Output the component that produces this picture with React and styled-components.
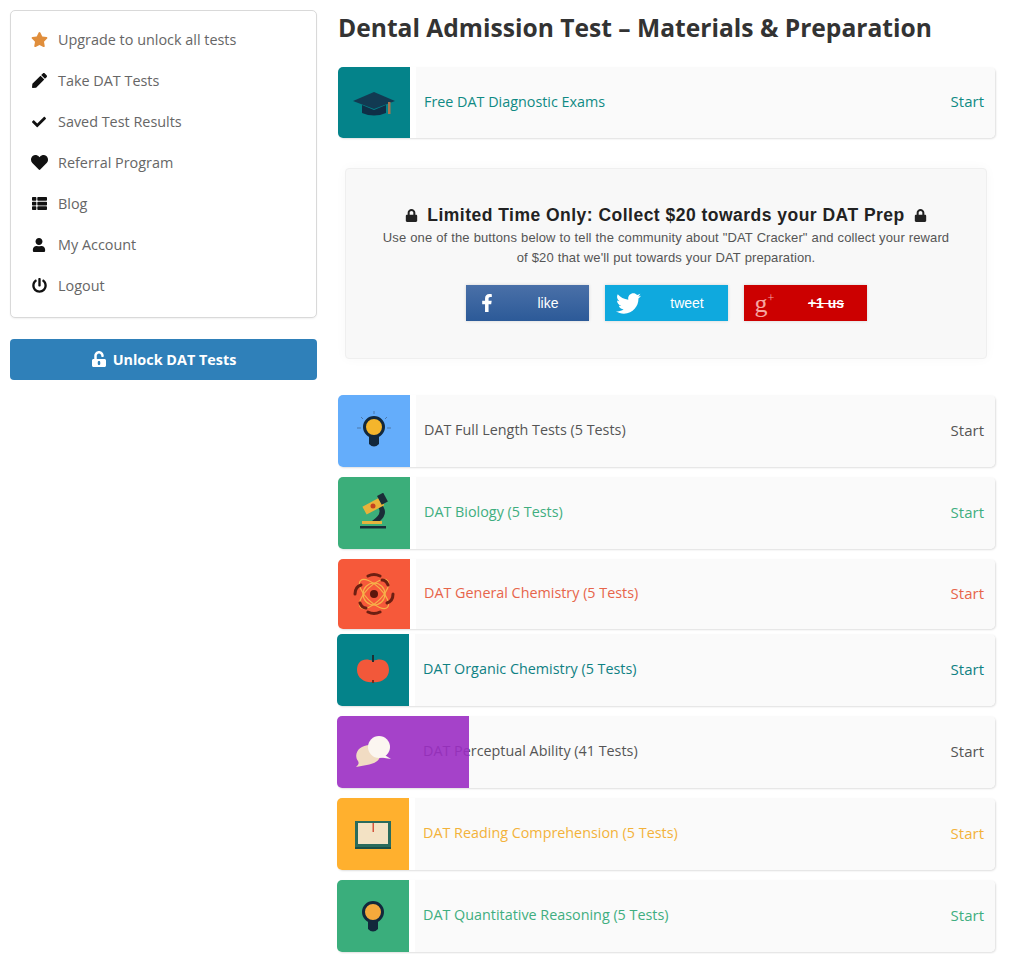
import React from 'react'
import styled, { createGlobalStyle } from 'styled-components'
import {
  FaStar, FaPen, FaCheck, FaHeart, FaThList, FaUser, FaPowerOff,
  FaLock, FaUnlockAlt, FaFacebookF, FaTwitter,
} from 'react-icons/fa'

const GlobalStyle = createGlobalStyle`
  html, body { margin: 0; padding: 0; background: #fff; }
  body { font-family: "Open Sans", "Liberation Sans", sans-serif; color: #555; }
  * { box-sizing: border-box; }
`

const Page = styled.div`
  display: grid;
  grid-template-columns: 307px 657px;
  column-gap: 21px;
  align-items: start;
  width: 1024px;
  height: 954px;
  padding: 10px 0 0 10px;
  overflow: hidden;
`

const Sidebar = styled.aside`
  display: flex;
  flex-direction: column;
  gap: 21px;
`

const MenuCard = styled.ul`
  list-style: none;
  margin: 0;
  height: 308px;
  padding: 8px 0 0 19px;
  background: #fff;
  border: 1px solid #d9d9d9;
  border-radius: 5px;
  box-shadow: 0 1px 2px rgba(0, 0, 0, 0.06);
`

const MenuItem = styled.li`
  display: flex;
  align-items: center;
  height: 41px;
  font-size: 14.4px;
  color: #666;
`

const MenuIcon = styled.span`
  display: flex;
  justify-content: center;
  width: 18px;
  margin-right: 10px;
  font-size: ${p => p.$size || 15}px;
  color: ${p => p.$color || '#111'};
`

const UnlockButton = styled.button`
  display: flex;
  align-items: center;
  justify-content: center;
  gap: 6px;
  height: 41px;
  border: 0;
  border-radius: 4px;
  background: #2f80b9;
  color: #fff;
  font-family: inherit;
  font-size: 14.4px;
  font-weight: 700;
  svg { font-size: 16px; margin-top: -2px; }
`

const Main = styled.main`
  display: flex;
  flex-direction: column;
`

const Title = styled.h1`
  margin: 0 0 22px;
  font-size: 24.6px;
  line-height: 35px;
  font-weight: 700;
  color: #333;
  white-space: nowrap;
`

const Row = styled.div`
  display: flex;
  align-items: center;
  flex: none;
  height: ${p => p.$height || 72}px;
  margin-bottom: ${p => p.$below ?? 10}px;
  margin-left: ${p => (p.$shift ? -1 : 0)}px;
  background: linear-gradient(to right, #fff 78px, #fafafa 78px);
  border-radius: 5px;
  box-shadow: 1px 1px 2px rgba(0, 0, 0, 0.13);
  font-size: 14.35px;
  color: ${p => p.$color};
`

const Tile = styled.div`
  position: ${p => (p.$wide ? 'relative' : 'static')};
  z-index: ${p => (p.$wide ? 1 : 'auto')};
  display: flex;
  align-items: center;
  flex: none;
  justify-content: flex-start;
  width: ${p => (p.$wide ? 132 : 72)}px;
  height: 100%;
  margin-right: ${p => (p.$wide ? -60 : 0)}px;
  padding-left: 14px;
  background: ${p => p.$bg};
  border-radius: 5px 0 0 5px;
`

const RowLabel = styled.span`
  flex: 1;
  padding-left: 14px;
  margin-top: -3px;
`

const RowStart = styled.span`
  padding-right: 11px;
  margin-top: -3px;
  font-size: 15px;
`

const Promo = styled.section`
  display: flex;
  flex-direction: column;
  align-items: center;
  width: 642px;
  height: 191px;
  margin: 30px 0 36px 7px;
  padding-top: 36px;
  background: #f8f8f8;
  border: 1px solid #efefef;
  border-radius: 4px;
  box-shadow: 0 0 12px rgba(0, 0, 0, 0.03);
  font-family: "Liberation Sans", Arial, sans-serif;
  text-align: center;
`

const PromoTitle = styled.h2`
  display: flex;
  align-items: center;
  gap: 9px;
  margin: 0;
  font-size: 17.5px;
  line-height: 20px;
  font-weight: 700;
  color: #222;
  letter-spacing: 0.48px;
  svg { font-size: 13px; }
`

const PromoText = styled.p`
  width: 600px;
  margin: 3px 0 17px;
  font-size: 13px;
  letter-spacing: 0.1px;
  word-spacing: 0.3px;
  line-height: 20px;
  color: #555;
`

const SocialRow = styled.div`
  display: flex;
  gap: 16px;
`

const SocialButton = styled.div`
  display: flex;
  align-items: center;
  width: 123px;
  height: 36px;
  background: ${p => p.$bg};
  color: #fff;
  font-size: 14px;
  box-shadow: 0 0 3px rgba(0, 0, 0, 0.15);
`

const SocialGlyph = styled.span`
  display: flex;
  align-items: center;
  justify-content: center;
  width: ${p => p.$width || 42}px;
  height: 100%;
  font-size: 18px;
`

const SocialLabel = styled.span`
  flex: 1;
  padding-right: ${p => p.$padRight || 0}px;
  font-weight: ${p => (p.$bold ? 700 : 400)};
  text-decoration: ${p => (p.$strike ? 'line-through' : 'none')};
`

const GooglePlus = styled.span`
  font-family: "Liberation Serif", serif;
  font-size: 26px;
  line-height: 26px;
  color: #f6a6a0;
  margin-top: -4px;
  sup { font-size: 12px; }
`

const Cap = () => (
  <svg width="44" height="32" viewBox="0 0 44 32">
    <path d="M22 5 L43 14 L22 22 L1 14 Z" fill="#123a52" />
    <path d="M10 18 L22 23 L34 18 V26 Q22 31 10 26 Z" fill="#0f2f47" />
    <rect x="36" y="15" width="2.5" height="12" fill="#a9764f" />
  </svg>
)

const Bulb = ({ fill = '#f4b52c', rays }) => (
  <svg width="44" height="40" viewBox="0 0 44 40">
    {rays && (
      <g stroke="#41628a" strokeWidth="1" opacity="0.7">
        <line x1="22" y1="0" x2="22" y2="3" />
        <line x1="9" y1="6" x2="11" y2="8" />
        <line x1="35" y1="6" x2="33" y2="8" />
        <line x1="5" y1="17" x2="9" y2="17" />
        <line x1="35" y1="17" x2="39" y2="17" />
      </g>
    )}
    <circle cx="22" cy="16" r="9.5" fill={fill} stroke="#12283c" strokeWidth="3" />
    <path d="M17 24 H27 V33 Q22 38 17 33 Z" fill="#12283c" />
  </svg>
)

const Microscope = () => (
  <svg width="44" height="40" viewBox="0 0 44 40">
    <path d="M8 33 H34 V35.5 H8 Z" fill="#1a2d38" />
    <path d="M10 28 H30 V31 H10 Z" fill="#e6b33e" />
    <path d="M28 10 Q38 19 28 28 H20 Q32 20 25 13 Z" fill="#1a2d38" />
    <rect x="11" y="8" width="20" height="9" transform="rotate(-28 22 12)" fill="#e8b23a" />
    <rect x="27" y="1" width="7" height="10" transform="rotate(-28 30 6)" fill="#1a2d38" />
    <circle cx="21" cy="13" r="2.5" fill="#c5401f" />
  </svg>
)

const Atom = () => (
  <svg width="44" height="44" viewBox="0 0 44 44">
    <g fill="none" stroke="#f7b24a" strokeWidth="1.2">
      <circle cx="22" cy="22" r="11" />
      <ellipse cx="22" cy="22" rx="19" ry="8" transform="rotate(45 22 22)" />
      <ellipse cx="22" cy="22" rx="19" ry="8" transform="rotate(-45 22 22)" />
    </g>
    <g fill="none" stroke="#6d1f12" strokeWidth="3" strokeLinecap="round">
      <path d="M3 22 Q3 15 9 13" />
      <path d="M41 22 Q41 29 35 31" />
      <path d="M16 4 Q22 1 28 4" />
      <path d="M16 40 Q22 43 28 40" />
      <path d="M8 31 Q10 36 14 36" />
      <path d="M36 13 Q34 8 30 8" />
    </g>
    <circle cx="22" cy="22" r="4" fill="#5a160c" />
  </svg>
)

const Apple = () => (
  <svg width="44" height="40" viewBox="0 0 44 40">
    <path d="M22 11 C31 7 38 11 38 20 C38 29 29 33 22 32 C15 33 6 29 6 20 C6 11 13 7 22 11 Z" fill="#f2583a" />
    <rect x="21" y="5" width="2" height="7" fill="#1d2f33" />
    <rect x="21" y="30" width="2" height="3" fill="#7a2b1b" />
  </svg>
)

const Bubbles = () => (
  <svg width="44" height="40" viewBox="0 0 44 40">
    <path d="M19 13 C29 13 32 21 28 27 C24 33 14 33 5 35 C8 32 8 31 7 29 C2 22 8 13 19 13 Z" fill="#f1dcc3" />
    <circle cx="28" cy="15" r="11" fill="#fbf6f0" />
    <path d="M32 22 L40 27 L27 25 Z" fill="#fbf6f0" />
  </svg>
)

const Book = () => (
  <svg width="44" height="40" viewBox="0 0 44 40">
    <path d="M4 7 H40 V33 H4 Z" fill="#2a6b5c" />
    <path d="M7 9 H22 V30 H7 Z M22 9 H37 V30 H22 Z" fill="#f3e2c4" />
    <path d="M21.5 9 H23 V18 H21.5 Z" fill="#d4553c" />
    <path d="M4 33 H40 V35 H4 Z" fill="#1c4f46" />
  </svg>
)

const menu = [
  { icon: <FaStar />, label: 'Upgrade to unlock all tests', color: '#e08e3c', size: 17 },
  { icon: <FaPen />, label: 'Take DAT Tests', size: 15 },
  { icon: <FaCheck />, label: 'Saved Test Results', size: 14 },
  { icon: <FaHeart />, label: 'Referral Program', size: 17 },
  { icon: <FaThList />, label: 'Blog' },
  { icon: <FaUser />, label: 'My Account', size: 14 },
  { icon: <FaPowerOff />, label: 'Logout' },
]

const tests = [
  { label: 'DAT Full Length Tests (5 Tests)', bg: '#64adfb', color: '#555', art: <Bulb rays /> },
  { label: 'DAT Biology (5 Tests)', bg: '#3bae7a', color: '#3fae80', art: <Microscope /> },
  { label: 'DAT General Chemistry (5 Tests)', bg: '#f6593a', color: '#e7654a', art: <Atom />, height: 70, below: 5 },
  { label: 'DAT Organic Chemistry (5 Tests)', bg: '#04838a', color: '#0f8183', art: <Apple />, shift: true },
  // this tile overlaps the label, which still shows faintly through it
  { label: 'DAT Perceptual Ability (41 Tests)', bg: 'rgba(155, 45, 195, 0.9)', color: '#555', art: <Bubbles />, shift: true, wide: true },
  { label: 'DAT Reading Comprehension (5 Tests)', bg: '#ffb02e', color: '#f3b23a', art: <Book />, shift: true },
  { label: 'DAT Quantitative Reasoning (5 Tests)', bg: '#3aae7c', color: '#3fae80', art: <Bulb fill="#f4a93c" />, shift: true },
]

const TestRow = ({ test }) => (
  <Row $color={test.color} $height={test.height} $below={test.below} $shift={test.shift}>
    <Tile $bg={test.bg} $wide={test.wide}>{test.art}</Tile>
    <RowLabel>{test.label}</RowLabel>
    <RowStart>Start</RowStart>
  </Row>
)

export default function App() {
  return (
    <Page>
      <GlobalStyle />
      <Sidebar>
        <MenuCard>
          {menu.map(item => (
            <MenuItem key={item.label}>
              <MenuIcon $color={item.color} $size={item.size}>{item.icon}</MenuIcon>
              {item.label}
            </MenuItem>
          ))}
        </MenuCard>
        <UnlockButton><FaUnlockAlt /> Unlock DAT Tests</UnlockButton>
      </Sidebar>
      <Main>
        <Title>Dental Admission Test – Materials &amp; Preparation</Title>
        <TestRow test={{ label: 'Free DAT Diagnostic Exams', bg: '#04838a', color: '#0f8a84', art: <Cap />, height: 71, below: 0 }} />
        <Promo>
          <PromoTitle><FaLock /> Limited Time Only: Collect $20 towards your DAT Prep <FaLock /></PromoTitle>
          <PromoText>Use one of the buttons below to tell the community about "DAT Cracker" and collect your reward<br />of $20 that we'll put towards your DAT preparation.</PromoText>
          <SocialRow>
            <SocialButton $bg="linear-gradient(#4a70a8, #2c5a98)">
              <SocialGlyph><FaFacebookF /></SocialGlyph>
              <SocialLabel>like</SocialLabel>
            </SocialButton>
            <SocialButton $bg="#0fa9de">
              <SocialGlyph $width={48}><FaTwitter size={25} /></SocialGlyph>
              <SocialLabel $padRight={6}>tweet</SocialLabel>
            </SocialButton>
            <SocialButton $bg="#cc0000">
              <SocialGlyph><GooglePlus>g<sup>+</sup></GooglePlus></SocialGlyph>
              <SocialLabel $bold $strike>+1 us</SocialLabel>
            </SocialButton>
          </SocialRow>
        </Promo>
        {tests.map(test => <TestRow key={test.label} test={test} />)}
      </Main>
    </Page>
  )
}
